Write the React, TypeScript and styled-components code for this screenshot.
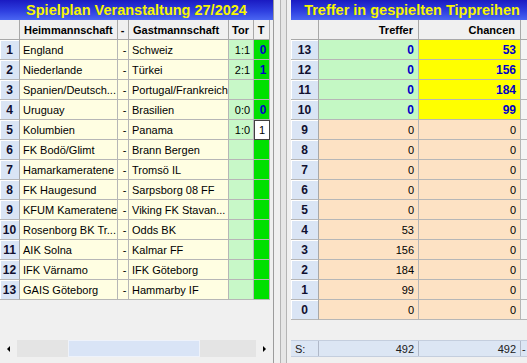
import React from "react";
import styled, { createGlobalStyle } from "styled-components";

interface Match {
  home: string;
  away: string;
  score?: string;
  tip?: string;
  editing?: boolean;
}

interface HitRow {
  n: number;
  treffer: number;
  chancen: number;
}

const matches: Match[] = [
  { home: "England", away: "Schweiz", score: "1:1", tip: "0" },
  { home: "Niederlande", away: "Türkei", score: "2:1", tip: "1" },
  { home: "Spanien/Deutsch...", away: "Portugal/Frankreich" },
  { home: "Uruguay", away: "Brasilien", score: "0:0", tip: "0" },
  { home: "Kolumbien", away: "Panama", score: "1:0", tip: "1", editing: true },
  { home: "FK Bodö/Glimt", away: "Brann Bergen" },
  { home: "Hamarkameratene", away: "Tromsö IL" },
  { home: "FK Haugesund", away: "Sarpsborg 08 FF" },
  { home: "KFUM Kameratene", away: "Viking FK Stavan..." },
  { home: "Rosenborg BK Tr...", away: "Odds BK" },
  { home: "AIK Solna", away: "Kalmar FF" },
  { home: "IFK Värnamo", away: "IFK Göteborg" },
  { home: "GAIS Göteborg", away: "Hammarby IF" },
];

const hits: HitRow[] = [
  { n: 13, treffer: 0, chancen: 53 },
  { n: 12, treffer: 0, chancen: 156 },
  { n: 11, treffer: 0, chancen: 184 },
  { n: 10, treffer: 0, chancen: 99 },
  { n: 9, treffer: 0, chancen: 0 },
  { n: 8, treffer: 0, chancen: 0 },
  { n: 7, treffer: 0, chancen: 0 },
  { n: 6, treffer: 0, chancen: 0 },
  { n: 5, treffer: 0, chancen: 0 },
  { n: 4, treffer: 53, chancen: 0 },
  { n: 3, treffer: 156, chancen: 0 },
  { n: 2, treffer: 184, chancen: 0 },
  { n: 1, treffer: 99, chancen: 0 },
  { n: 0, treffer: 0, chancen: 0 },
];

const App: React.FC = () => {
  const sumT = hits.reduce((s, h) => s + h.treffer, 0);
  const sumC = hits.reduce((s, h) => s + h.chancen, 0);

  return (
    <>
      <GlobalStyle />
      <Window>
        <LeftPanel>
          <TitleBar>Spielplan Veranstaltung 27/2024</TitleBar>
          <MatchRow>
            <HeadCell />
            <HeadCell>Heimmannschaft</HeadCell>
            <HeadCell $align="center">-</HeadCell>
            <HeadCell>Gastmannschaft</HeadCell>
            <HeadCell $align="center">Tor</HeadCell>
            <HeadCell $align="center">T</HeadCell>
          </MatchRow>
          {matches.map((m, i) => (
            <MatchRow key={i}>
              <NumCell>{i + 1}</NumCell>
              <Cell $bg="#fffee2">{m.home}</Cell>
              <Cell $bg="#fffee2" $align="center">
                -
              </Cell>
              <Cell $bg="#fffee2">{m.away}</Cell>
              <Cell $bg="#c8f8c8" $align="center">
                {m.score}
              </Cell>
              {m.editing ? (
                <EditCell>{m.tip}</EditCell>
              ) : (
                <Cell $bg="#00e000" $align="center" $bold $color="#0000c8">
                  {m.tip}
                </Cell>
              )}
            </MatchRow>
          ))}
          <Filler />
          <ScrollBar>
            <ArrowButton>
              <Arrow $dir="left" />
            </ArrowButton>
            <Track $w={51} />
            <Thumb />
            <Track />
            <ArrowButton>
              <Arrow $dir="right" />
            </ArrowButton>
          </ScrollBar>
          <BottomPad />
        </LeftPanel>

        <Splitter />

        <RightPanel>
          <TitleBar>Treffer in gespielten Tippreihen</TitleBar>
          <HitGridRow>
            <HeadCell />
            <HeadCell $align="right">Treffer</HeadCell>
            <HeadCell $align="right">Chancen</HeadCell>
            <HeadCell />
          </HitGridRow>
          {hits.map((h) => {
            const top = h.n >= 10;
            return (
              <HitGridRow key={h.n}>
                <NumCell>{h.n}</NumCell>
                <Cell
                  $bg={top ? "#c4f8c4" : "#fde2c4"}
                  $align="right"
                  $bold={top}
                  $color={top ? "#0000c8" : "#000"}
                >
                  {h.treffer}
                </Cell>
                <Cell
                  $bg={top ? "#ffff00" : "#fde2c4"}
                  $align="right"
                  $bold={top}
                  $color={top ? "#0000c8" : "#000"}
                >
                  {h.chancen}
                </Cell>
                <Cell $bg="#f4f4f4" />
              </HitGridRow>
            );
          })}
          <Filler />
          <SumRow>
            <SumCell>S:</SumCell>
            <SumCell $align="right">{sumT}</SumCell>
            <SumCell $align="right">{sumC}</SumCell>
            <DashCell>-</DashCell>
          </SumRow>
          <BottomPad />
        </RightPanel>
      </Window>
    </>
  );
};

export default App;

const GlobalStyle = createGlobalStyle`
  html, body {
    margin: 0;
    padding: 0;
    background: #f0f0f0;
    overflow: hidden;
  }
  body {
    font-family: "Liberation Sans", Arial, sans-serif;
    font-size: 11px;
    color: #000;
  }
`;

const Window = styled.div`
  display: flex;
  width: 527px;
  height: 363px;
  overflow: hidden;
  background: #f0f0f0;
`;

const LeftPanel = styled.div`
  flex: none;
  width: 274px;
  display: flex;
  flex-direction: column;
  border-right: 1px solid #9c9c9c;
  box-sizing: border-box;
`;

const RightPanel = styled.div`
  flex: none;
  width: 242px;
  display: flex;
  flex-direction: column;
`;

const Splitter = styled.div`
  flex: none;
  width: 17px;
  background: linear-gradient(
    to right,
    #f0f0f0 0 6px,
    #b4b4b4 6px 7px,
    #e6e6e6 7px 12px,
    #b4b4b4 12px 13px,
    #f0f0f0 13px
  );
`;

const TitleBar = styled.div`
  height: 20px;
  line-height: 20px;
  text-align: center;
  white-space: nowrap;
  overflow: hidden;
  font-size: 14.5px;
  font-weight: bold;
  color: #f6f600;
  background: linear-gradient(to bottom, #1a1ac2 0%, #2e3fe0 55%, #4a66f2 100%);
`;

const MatchRow = styled.div`
  display: grid;
  grid-template-columns: 20px 98px 11px 100px 25px 16px;
  height: 20px;
`;

const HitGridRow = styled.div`
  display: grid;
  grid-template-columns: 28px 100px 102px 20px;
  height: 20px;
`;

const Cell = styled.div<{
  $bg?: string;
  $align?: "left" | "center" | "right";
  $bold?: boolean;
  $color?: string;
}>`
  display: flex;
  align-items: center;
  justify-content: ${(p) =>
    p.$align === "center"
      ? "center"
      : p.$align === "right"
      ? "flex-end"
      : "flex-start"};
  padding: ${(p) => (p.$align === "right" ? "0 4px 0 2px" : "0 0 0 3px")};
  box-sizing: border-box;
  overflow: hidden;
  white-space: nowrap;
  background: ${(p) => p.$bg || "#f0f0f0"};
  color: ${(p) => p.$color || "#000"};
  font-weight: ${(p) => (p.$bold ? "bold" : "normal")};
  font-size: ${(p) => (p.$bold ? "12px" : "11px")};
  border-right: 1px solid #b6b6b6;
  border-bottom: 1px solid #b6b6b6;
`;

const HeadCell = styled(Cell)`
  background: #f0f0f0;
  font-weight: bold;
  font-size: 11px;
  padding: 0 5px 0 4px;
  border-right-color: #a8a8a8;
  border-bottom-color: #a8a8a8;
`;

const NumCell = styled(Cell)`
  justify-content: center;
  padding: 0;
  background: #dae5f5;
  box-shadow: inset 1px 1px 0 #ffffff;
  font-weight: bold;
  font-size: 12px;
  color: #101030;
  border-right-color: #a8a8a8;
`;

const EditCell = styled.div`
  display: flex;
  align-items: center;
  justify-content: center;
  box-sizing: border-box;
  background: #fff;
  border: 1px solid #404040;
  font-size: 11px;
`;

const Filler = styled.div`
  flex: 1;
`;

const BottomPad = styled.div`
  height: 6px;
  flex: none;
`;

const ScrollBar = styled.div`
  display: flex;
  height: 17px;
  flex: none;
  width: 273px;
`;

const ArrowButton = styled.div`
  width: 17px;
  flex: none;
  display: flex;
  align-items: center;
  justify-content: center;
  background: #f0f0f0;
`;

const Arrow = styled.span<{ $dir: "left" | "right" }>`
  width: 0;
  height: 0;
  border-top: 3px solid transparent;
  border-bottom: 3px solid transparent;
  ${(p) =>
    p.$dir === "left"
      ? "border-right: 3px solid #000;"
      : "border-left: 3px solid #000;"}
`;

const Track = styled.div<{ $w?: number }>`
  background: #e4e4e4;
  ${(p) => (p.$w ? `width: ${p.$w}px; flex: none;` : "flex: 1;")}
`;

const Thumb = styled.div`
  width: 132px;
  flex: none;
  box-sizing: border-box;
  background: #d9e4f6;
  border: 1px solid #eef2fa;
`;

const SumRow = styled.div`
  display: grid;
  grid-template-columns: 28px 100px 102px 20px;
  height: 17px;
  flex: none;
  background: #dce6f4;
  border-top: 1px solid #c4cede;
  border-bottom: 1px solid #c4cede;
  box-sizing: border-box;
`;

const SumCell = styled.div<{ $align?: "left" | "right" }>`
  display: flex;
  align-items: center;
  justify-content: ${(p) => (p.$align === "right" ? "flex-end" : "flex-start")};
  padding: 0 4px 0 4px;
  border-right: 1px solid #b0b8c8;
  font-size: 11px;
  color: #202020;
  white-space: nowrap;
  overflow: hidden;
`;

const DashCell = styled(SumCell)`
  padding: 0 0 0 1px;
`;
